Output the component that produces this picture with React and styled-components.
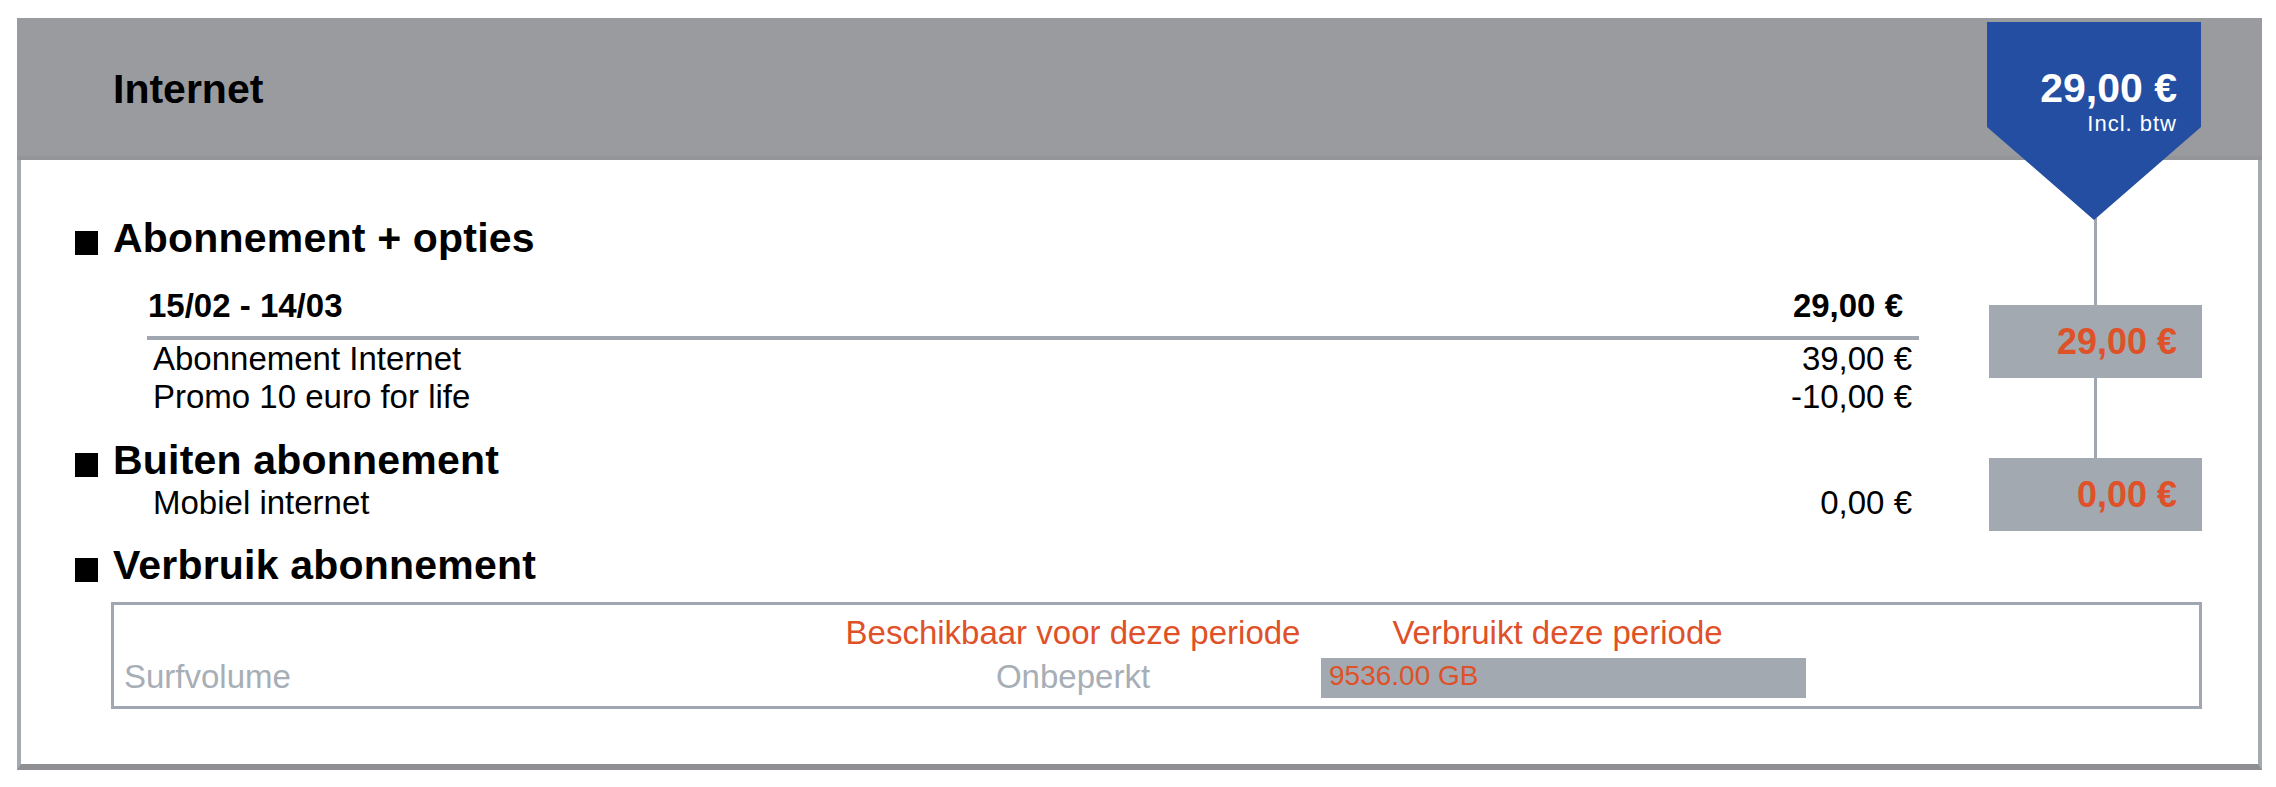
import React from "react";
import styled, { createGlobalStyle } from "styled-components";

const GlobalStyle = createGlobalStyle`
    body {
        margin: 0;
        background: #fff;
        font-family: "Liberation Sans", Arial, Helvetica, sans-serif;
        color: #000;
    }
`;

const ORANGE = "#df5128";
const LINE = "#a0a7b0";

const Page = styled.div`
    padding: 18px 14px 0 17px;
`;

const Frame = styled.section`
    position: relative;
    background: #fff;
    border: 4px solid #a3aab2;
    border-top: 0;
    border-bottom: 6px solid #8e8f93;
`;

const Header = styled.header`
    margin: 0 -4px;
    height: 142px;
    box-sizing: border-box;
    display: flex;
    align-items: center;
    padding: 4px 0 0 96px;
    background: #9a9b9f;
    border-bottom: 4px solid #949599;
    font-size: 41px;
    font-weight: 700;
    line-height: 47px;
`;

/* blue price flag hanging over the header */
const Pennant = styled.div`
    position: absolute;
    top: 4px;
    right: 57px;
    width: 214px;
    height: 198px;
    box-sizing: border-box;
    padding: 46px 24px 0 0;
    background: #234ea2;
    clip-path: polygon(0 0, 100% 0, 100% 105px, 50% 100%, 0 105px);
    color: #fff;
    text-align: right;
`;

const PennantPrice = styled.div`
    font-size: 41px;
    font-weight: 700;
    line-height: 40px;
`;

const PennantNote = styled.div`
    font-size: 22px;
    line-height: 31px;
    letter-spacing: 1px;
`;

const Body = styled.div`
    padding: 55px 56px 55px 54px;
`;

const Summary = styled.div`
    display: grid;
    grid-template-columns: 1fr 213px;
    column-gap: 70px;
`;

const Title = styled.h2`
    margin: ${(p) => p.$top || 0}px 0 0;
    font-size: 41px;
    font-weight: 700;
    line-height: 47px;
    letter-spacing: 0.2px;
`;

const Bullet = styled.span`
    display: inline-block;
    width: 23px;
    height: 24px;
    margin-right: 15px;
    background: #000;
    vertical-align: -3px;
`;

const Period = styled.div`
    margin: ${(p) => p.$top || 0}px 0 0 72px;
`;

const PeriodHead = styled.div`
    display: flex;
    justify-content: space-between;
    padding: 0 16px 11px 1px;
    border-bottom: 4px solid ${LINE};
    font-size: 33px;
    font-weight: 700;
    line-height: 38px;
`;

const Line = styled.div`
    display: flex;
    justify-content: space-between;
    padding: 0 7px 0 6px;
    font-size: 33px;
    line-height: 38px;
`;

const Track = styled.div`
    display: flex;
    flex-direction: column;
    align-items: center;
`;

const Connector = styled.div`
    width: 3px;
    height: ${(p) => p.$h}px;
    background: ${LINE};
`;

const TotalBox = styled.div`
    align-self: stretch;
    height: 73px;
    display: flex;
    align-items: center;
    justify-content: flex-end;
    padding-right: 25px;
    background: #a2a9b1;
    color: ${ORANGE};
    font-size: 36px;
    font-weight: 700;
`;

const UsageBox = styled.div`
    margin: 13px 0 0 36px;
    padding: 9px 0 8px 10px;
    border: 3px solid ${LINE};
    display: grid;
    grid-template-columns: 701px 474px 485px 1fr;
    grid-template-rows: 38px 40px;
    column-gap: 11px;
    row-gap: 6px;
`;

const ColHead = styled.div`
    color: ${ORANGE};
    font-size: 33px;
    line-height: 38px;
    text-align: center;
    padding-right: ${(p) => p.$shift || 0}px;
`;

const Muted = styled.div`
    color: #a7aeb6;
    font-size: 33px;
    line-height: 38px;
    text-align: ${(p) => (p.$center ? "center" : "left")};
`;

const UsedBar = styled.div`
    height: 40px;
    box-sizing: border-box;
    padding-left: 8px;
    background: #a2a9b1;
    color: ${ORANGE};
    font-size: 28px;
    line-height: 36px;
`;

const App = () => {
    return (
        <Page>
            <GlobalStyle />
            <Frame>
                <Header>Internet</Header>
                <Pennant>
                    <PennantPrice>29,00 €</PennantPrice>
                    <PennantNote>Incl. btw</PennantNote>
                </Pennant>
                <Body>
                    <Summary>
                        <div>
                            <Title>
                                <Bullet />
                                Abonnement + opties
                            </Title>
                            <Period $top={25}>
                                <PeriodHead>
                                    <span>15/02 - 14/03</span>
                                    <span>29,00 €</span>
                                </PeriodHead>
                                <Line>
                                    <span>Abonnement Internet</span>
                                    <span>39,00 €</span>
                                </Line>
                                <Line>
                                    <span>Promo 10 euro for life</span>
                                    <span>-10,00 €</span>
                                </Line>
                            </Period>
                            <Title $top={21}>
                                <Bullet />
                                Buiten abonnement
                            </Title>
                            <Period>
                                <Line>
                                    <span>Mobiel internet</span>
                                    <span>0,00 €</span>
                                </Line>
                            </Period>
                        </div>
                        <Track>
                            <Connector $h={90} />
                            <TotalBox>29,00 €</TotalBox>
                            <Connector $h={80} />
                            <TotalBox>0,00 €</TotalBox>
                        </Track>
                    </Summary>
                    <Title $top={11}>
                        <Bullet />
                        Verbruik abonnement
                    </Title>
                    <UsageBox>
                        <span />
                        <ColHead>Beschikbaar voor deze periode</ColHead>
                        <ColHead $shift={12}>Verbruikt deze periode</ColHead>
                        <span />
                        <Muted>Surfvolume</Muted>
                        <Muted $center>Onbeperkt</Muted>
                        <UsedBar>9536.00 GB</UsedBar>
                        <span />
                    </UsageBox>
                </Body>
            </Frame>
        </Page>
    );
};

export default App;
